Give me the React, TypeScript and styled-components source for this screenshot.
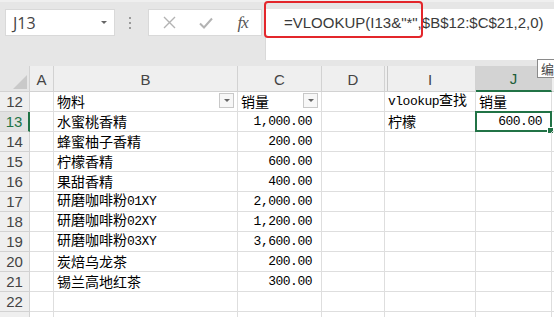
import React from "react";
import styled, { createGlobalStyle, css } from "styled-components";

const GlobalStyle = createGlobalStyle`
  html, body { margin: 0; padding: 0; background: #fff; }
  body {
    width: 554px;
    height: 317px;
    overflow: hidden;
    font-family: "Liberation Sans", Arial, sans-serif;
  }
`;

const GREEN = "#217346";
const GRID = "#dedede";

const Page = styled.div`
  position: relative;
  width: 554px;
  height: 317px;
  overflow: hidden;
`;

const TopBar = styled.div`
  display: flex;
  align-items: flex-start;
  height: 66px;
  box-sizing: border-box;
  padding: 9px 0 0 5px;
  background: #e6e6e6;
  box-shadow: inset 0 2px 0 #efefef;
`;

const NameBox = styled.div`
  display: flex;
  align-items: center;
  justify-content: space-between;
  width: 110px;
  height: 27px;
  box-sizing: border-box;
  padding: 0 7px 0 7px;
  background: #fff;
  border: 1px solid #d9d9d9;
  font: 16px "Open Sans", "Liberation Sans", sans-serif;
  color: #444;
`;

const Caret = styled.span`
  width: 0;
  height: 0;
  border-left: 3px solid transparent;
  border-right: 3px solid transparent;
  border-top: 3px solid #666;
`;

const Dots = styled.div`
  display: flex;
  flex-direction: column;
  gap: 3px;
  margin: 8px 17px 0 14px;
  span {
    width: 2px;
    height: 2px;
    background: #9a9a9a;
  }
`;

const FxBox = styled.div`
  display: flex;
  align-items: center;
  width: 114px;
  height: 27px;
  box-sizing: border-box;
  padding-left: 2px;
  background: #fff;
  border: 1px solid #d9d9d9;
`;

const FxSlot = styled.div`
  width: 38px;
  display: flex;
  justify-content: center;
  align-items: center;
`;

const FxText = styled.span`
  font: italic 17px "Liberation Serif", serif;
  color: #555;
  letter-spacing: -1px;
`;

const FormulaBox = styled.div`
  position: relative;
  flex: 1;
  height: 51px;
  margin-left: 3px;
  box-sizing: border-box;
  padding-left: 18px;
  background: #fff;
  border-left: 1px solid #d9d9d9;
  font: 15px "Liberation Sans", Arial, sans-serif;
  line-height: 27px;
  color: #3a3a3a;
  white-space: nowrap;
`;

const RedMark = styled.div`
  position: absolute;
  left: -2px;
  top: -8px;
  width: 159px;
  height: 37px;
  box-sizing: border-box;
  border: 2px solid #e3262b;
  border-radius: 4px;
`;

const Tip = styled.div`
  position: absolute;
  left: 537px;
  top: 59px;
  height: 19px;
  box-sizing: border-box;
  padding: 0 3px;
  background: #fff;
  border: 1px solid #8a8a8a;
  font: 13px "Noto Sans CJK SC", sans-serif;
  line-height: 17px;
  color: #444;
  white-space: nowrap;
`;

const Sheet = styled.div`
  display: grid;
  grid-template-columns: 30px 24px 184px 84px 63px 91px 76px 1fr;
  grid-template-rows: 26px;
  grid-auto-rows: 20px;
  background: #fff;
`;

const HeadBase = css`
  display: flex;
  justify-content: center;
  box-sizing: border-box;
  background: #efefef;
  color: #444;
  font: 15px "Liberation Sans", Arial, sans-serif;
  border-right: 1px solid #d2d2d2;
  border-bottom: 1px solid #d2d2d2;
`;

const Corner = styled.div`
  ${HeadBase};
  background: #e6e6e6;
  align-items: flex-end;
  justify-content: flex-end;
  padding: 0 2px 2px 0;
`;

const ColHead = styled.div<{ $sel?: boolean; $afterHidden?: boolean }>`
  ${HeadBase};
  align-items: flex-end;
  padding-bottom: 3px;
  line-height: 16px;
  ${(p) =>
    p.$afterHidden &&
    css`
      box-shadow: inset 2px 0 0 #efefef, inset 3px 0 0 #c8c8c8;
    `}
  ${(p) =>
    p.$sel &&
    css`
      background: #d3d3d3;
      color: #1d5e38;
      border-bottom: 2px solid ${GREEN};
    `}
`;

const RowHead = styled.div<{ $sel?: boolean }>`
  ${HeadBase};
  align-items: center;
  ${(p) =>
    p.$sel &&
    css`
      background: #e1e1e1;
      color: ${GREEN};
      border-right: 2px solid ${GREEN};
    `}
`;

const Cell = styled.div<{ $right?: boolean }>`
  position: relative;
  display: flex;
  align-items: flex-end;
  justify-content: ${(p) => (p.$right ? "flex-end" : "flex-start")};
  box-sizing: border-box;
  padding: 0 ${(p) => (p.$right ? "9px" : "3px")} 2px 3px;
  border-right: 1px solid ${GRID};
  border-bottom: 1px solid ${GRID};
  color: #000;
  white-space: nowrap;
`;

const Text = styled.span`
  font: 14px "Noto Sans CJK SC", sans-serif;
  line-height: 16px;
`;

const Lat = styled.span`
  font: 13px "Liberation Mono", monospace;
  letter-spacing: -0.5px;
`;

const Filter = styled.span`
  align-self: flex-start;
  display: flex;
  align-items: center;
  justify-content: center;
  width: 15px;
  height: 15px;
  box-sizing: border-box;
  margin: 1px 0 0 auto;
  background: #f7f7f7;
  border: 1px solid #c8c8c8;
  &::after {
    content: "";
    border-left: 3px solid transparent;
    border-right: 3px solid transparent;
    border-top: 3px solid #666;
  }
`;

const Selection = styled.div`
  position: absolute;
  left: -1px;
  top: -1px;
  right: -1px;
  bottom: -1px;
  border: 2px solid ${GREEN};
  pointer-events: none;
`;

const Handle = styled.div`
  position: absolute;
  right: -4px;
  bottom: -4px;
  width: 5px;
  height: 5px;
  background: ${GREEN};
  border: 1px solid #fff;
`;

const cols = ["A", "B", "C", "D", "I", "J"];

type Row = { n: number; label: string; b: React.ReactNode; c: string };

const rows: Row[] = [
  { n: 13, label: "13", b: "水蜜桃香精", c: "1,000.00" },
  { n: 14, label: "14", b: "蜂蜜柚子香精", c: "200.00" },
  { n: 15, label: "15", b: "柠檬香精", c: "600.00" },
  { n: 16, label: "16", b: "果甜香精", c: "400.00" },
  { n: 17, label: "17", b: <>研磨咖啡粉<Lat>01XY</Lat></>, c: "2,000.00" },
  { n: 18, label: "18", b: <>研磨咖啡粉<Lat>02XY</Lat></>, c: "1,200.00" },
  { n: 19, label: "19", b: <>研磨咖啡粉<Lat>03XY</Lat></>, c: "3,600.00" },
  { n: 20, label: "20", b: "炭焙乌龙茶", c: "200.00" },
  { n: 21, label: "21", b: "锡兰高地红茶", c: "300.00" },
  { n: 22, label: "22", b: "", c: "" },
  // only a sliver of the next row shows at the bottom edge
  { n: 23, label: "", b: "", c: "" },
];

function CloseIcon() {
  return (
    <svg width="13" height="13" viewBox="0 0 13 13">
      <path d="M1 1 L12 12 M12 1 L1 12" stroke="#b3b3b3" strokeWidth="1.4" fill="none" />
    </svg>
  );
}

function CheckIcon() {
  return (
    <svg width="14" height="12" viewBox="0 0 14 12">
      <path d="M1 6.5 L5 10.5 L13 1.5" stroke="#b3b3b3" strokeWidth="2" fill="none" />
    </svg>
  );
}

function CornerMark() {
  return (
    <svg width="14" height="14" viewBox="0 0 14 14">
      <polygon points="14,0 14,14 0,14" fill="#c9c9c9" />
    </svg>
  );
}

export default function App() {
  return (
    <Page>
      <GlobalStyle />
      <TopBar>
        <NameBox>
          J13
          <Caret />
        </NameBox>
        <Dots>
          <span />
          <span />
          <span />
        </Dots>
        <FxBox>
          <FxSlot>
            <CloseIcon />
          </FxSlot>
          <FxSlot>
            <CheckIcon />
          </FxSlot>
          <FxSlot>
            <FxText>fx</FxText>
          </FxSlot>
        </FxBox>
        <FormulaBox>
          =VLOOKUP(I13&amp;"*",$B$12:$C$21,2,0)
          <RedMark />
        </FormulaBox>
      </TopBar>

      <Sheet>
        <Corner>
          <CornerMark />
        </Corner>
        {cols.map((c) => (
          <ColHead key={c} $sel={c === "J"} $afterHidden={c === "I"}>
            {c}
          </ColHead>
        ))}
        <ColHead />

        <RowHead>12</RowHead>
        <Cell />
        <Cell>
          <Text>物料</Text>
          <Filter />
        </Cell>
        <Cell>
          <Text>销量</Text>
          <Filter />
        </Cell>
        <Cell />
        <Cell>
          <Text>
            <Lat>vlookup</Lat>查找
          </Text>
        </Cell>
        <Cell>
          <Text>销量</Text>
        </Cell>
        <Cell />

        {rows.map((r) => (
          <React.Fragment key={r.n}>
            <RowHead $sel={r.n === 13}>{r.label}</RowHead>
            <Cell />
            <Cell>
              <Text>{r.b}</Text>
            </Cell>
            <Cell $right>
              <Text>{r.c && <Lat>{r.c}</Lat>}</Text>
            </Cell>
            <Cell />
            <Cell>
              <Text>{r.n === 13 ? "柠檬" : ""}</Text>
            </Cell>
            {r.n === 13 ? (
              <Cell $right>
                <Text>
                  <Lat>600.00</Lat>
                </Text>
                <Selection>
                  <Handle />
                </Selection>
              </Cell>
            ) : (
              <Cell />
            )}
            <Cell />
          </React.Fragment>
        ))}
      </Sheet>
      <Tip>编辑栏</Tip>
    </Page>
  );
}
